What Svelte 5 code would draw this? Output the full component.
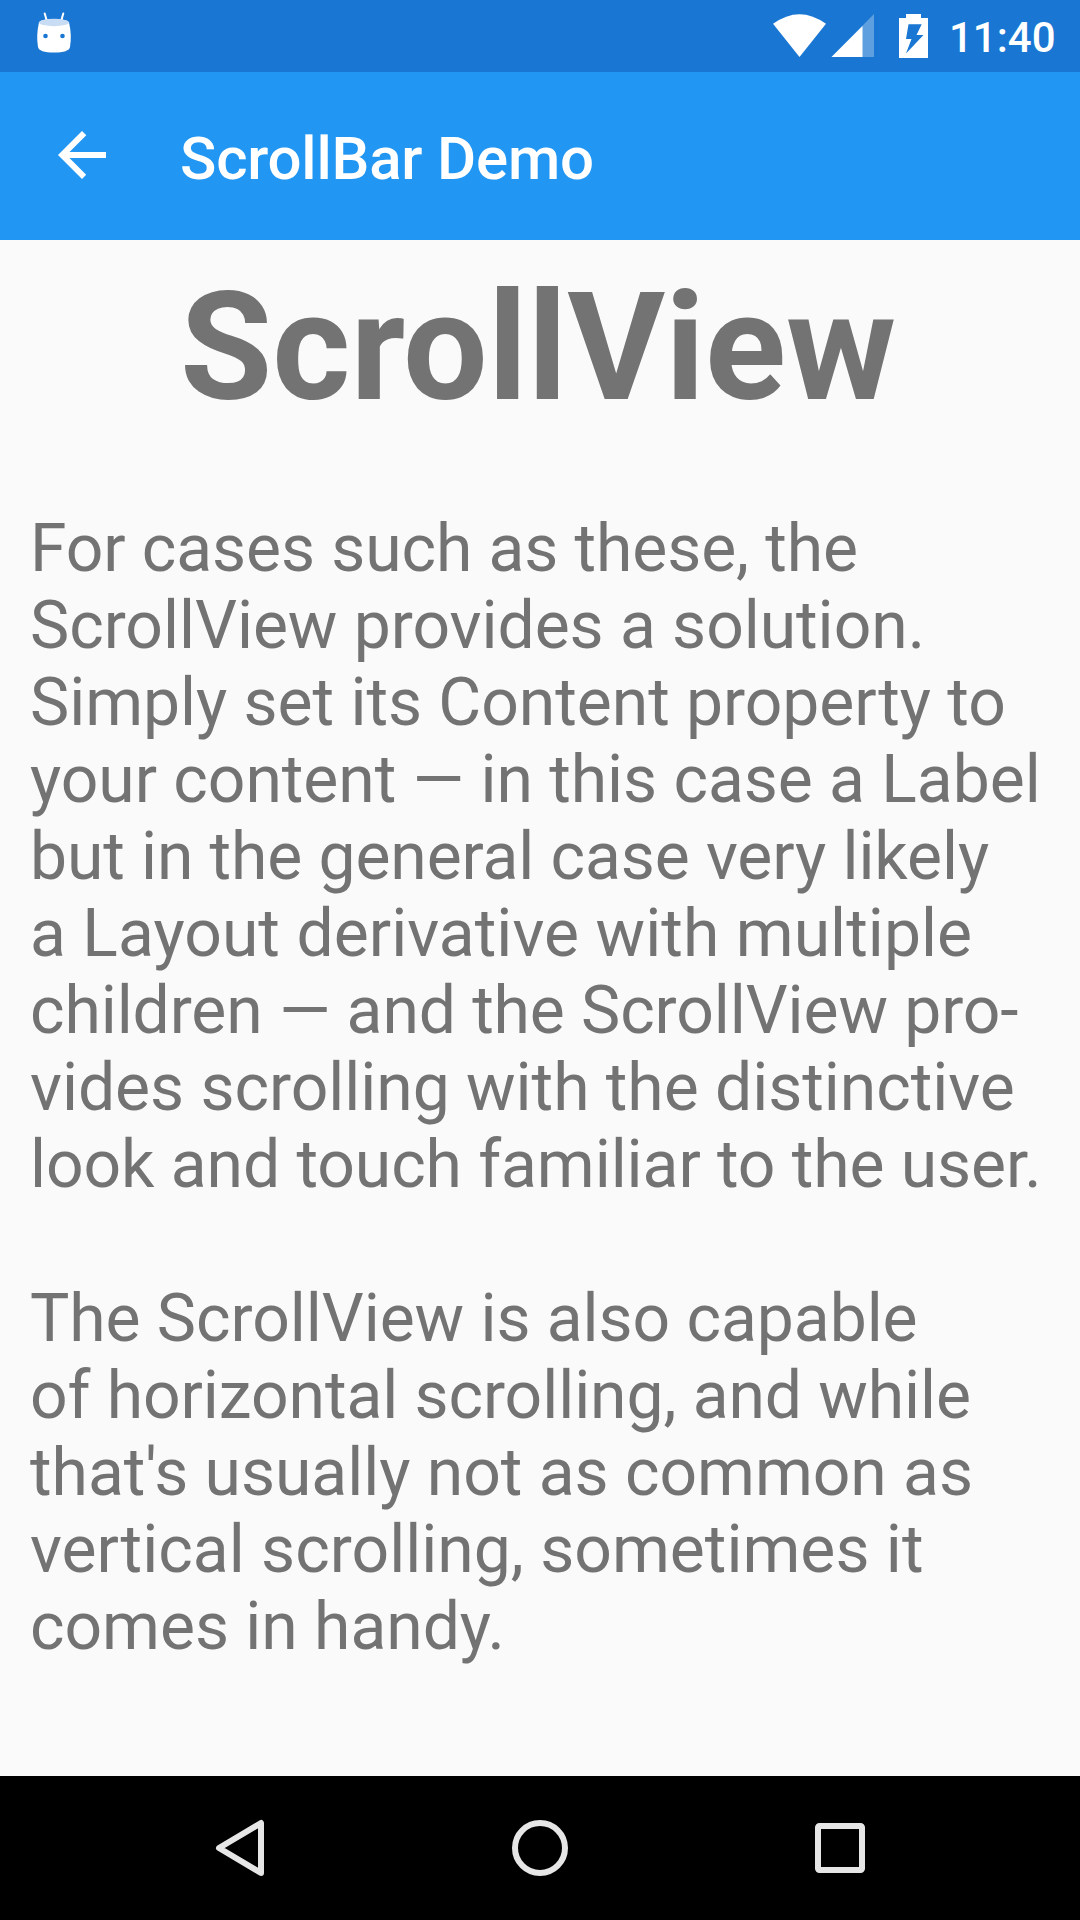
<script>
  // Each line carries the total width adjustment, in pixels, of its set text.
  const lines = [
    { text: 'For cases such as these, the', fit: -2.6 },
    { text: 'ScrollView provides a solution.', fit: -1.4 },
    { text: 'Simply set its Content property to', fit: -1.4 },
    { text: 'your content — in this case a Label', fit: -1.4 },
    { text: 'but in the general case very likely', fit: -3.6 },
    { text: 'a Layout derivative with multiple', fit: 1.6 },
    { text: 'children — and the ScrollView pro-', fit: -3.4 },
    { text: 'vides scrolling with the distinctive', fit: -1.4 },
    { text: 'look and touch familiar to the user.', fit: -2.8 },
    { text: '', fit: 0 },
    { text: 'The ScrollView is also capable', fit: -1.8 },
    { text: 'of horizontal scrolling, and while', fit: -2.6 },
    { text: "that's usually not as common as", fit: -1 },
    { text: 'vertical scrolling, sometimes it', fit: 0.3 },
    { text: 'comes in handy.', fit: -0.5 }
  ];
  const tracking = ({ text, fit }) => (text ? fit / text.length : 0);
</script>

<div class="screen">
  <div class="status">
    <svg class="droid" width="36" height="44" viewBox="0 0 36 44">
      <path d="M8.700 2.500l2.300 8M27.300 2.500l-2.300 8" stroke="#fff" stroke-width="2" stroke-linecap="round" fill="none" />
      <path d="M3 11.500Q4 8 18 8T33 11.500Q36 24 34 36Q33 41.500 18 41.500T2 36Q0 24 3 11.500Z" fill="#fff" />
      <ellipse cx="18" cy="11.500" rx="15" ry="3.700" fill="#c8dcf4" />
      <circle cx="9.500" cy="25" r="2.300" fill="#1976d2" /><circle cx="26.500" cy="25" r="2.300" fill="#1976d2" />
    </svg>
    <svg class="sys" width="160" height="48" viewBox="0 0 160 48">
      <path d="M0 11.800Q26.500-7.500 53 11.800L26.500 45Z" fill="#fff" />
      <path d="M101 2V45H58.500Z" fill="#fff" fill-opacity=".3" />
      <path d="M89.500 14V45H58.500Z" fill="#fff" />
      <path d="M133 2h15v4h7v40h-29V6h7Z" fill="#fff" />
      <path d="M135.500 12.300H148.700L143.500 23H150.500L133 41.500L138.500 27H133Z" fill="#1976d2" />
    </svg>
    <span class="time">11:40</span>
  </div>
  <header>
    <svg class="back" width="48" height="48" viewBox="0 0 48 48">
      <path d="M48 21H11.500L28.300 4.200 24 0 0 24 24 48l4.200-4.200L11.500 27H48Z" fill="#fff" />
    </svg>
    <span class="title">ScrollBar Demo</span>
  </header>
  <main>
    <h1>ScrollView</h1>
    <div class="text">
      {#each lines as line}<div class="line" style:letter-spacing="{tracking(line)}px">{line.text}</div>{/each}
    </div>
  </main>
  <nav>
    <svg width="1080" height="144" viewBox="0 0 1080 144" fill="none" stroke="#e6e6e6" stroke-width="6">
      <path d="M261 47V97L219 72Z" stroke-linejoin="round" />
      <circle cx="540" cy="72" r="25" />
      <rect x="818" y="50" width="44" height="44" rx="1.500" />
    </svg>
  </nav>
</div>

<style>
  :global(body) { background: #fafafa; }
  .screen { width: 1080px; height: 1920px; display: flex; flex-direction: column; font-family: Roboto, sans-serif; overflow: hidden; background: #fafafa; }
  .status { height: 72px; background: #1976d2; display: flex; align-items: flex-start; color: #fff; }
  svg { display: block; flex: none; overflow: visible; }
  .droid { margin: 11px 0 0 36px; }
  .sys { margin: 12px 0 0 701px; }
  .time { font-size: 42px; line-height: 72px; font-weight: 500; margin: 2px 0 0 16px; white-space: nowrap; }
  header { height: 168px; background: #2196f3; display: flex; align-items: center; color: #fff; }
  .back { margin: 0 0 2px 58px; }
  .title { font-size: 60px; font-weight: 500; margin: 5px 0 0 74px; letter-spacing: -0.2px; white-space: nowrap; }
  main { flex: 1; color: #737373; }
  h1 { margin: 20px 4px 0 0; font-size: 150px; line-height: 176px; font-weight: 700; text-align: center; }
  .text { padding: 74px 30px 0; font-size: 66px; }
  .line { height: 77px; line-height: 77px; white-space: nowrap; }
  nav { height: 144px; background: #000; }
</style>
